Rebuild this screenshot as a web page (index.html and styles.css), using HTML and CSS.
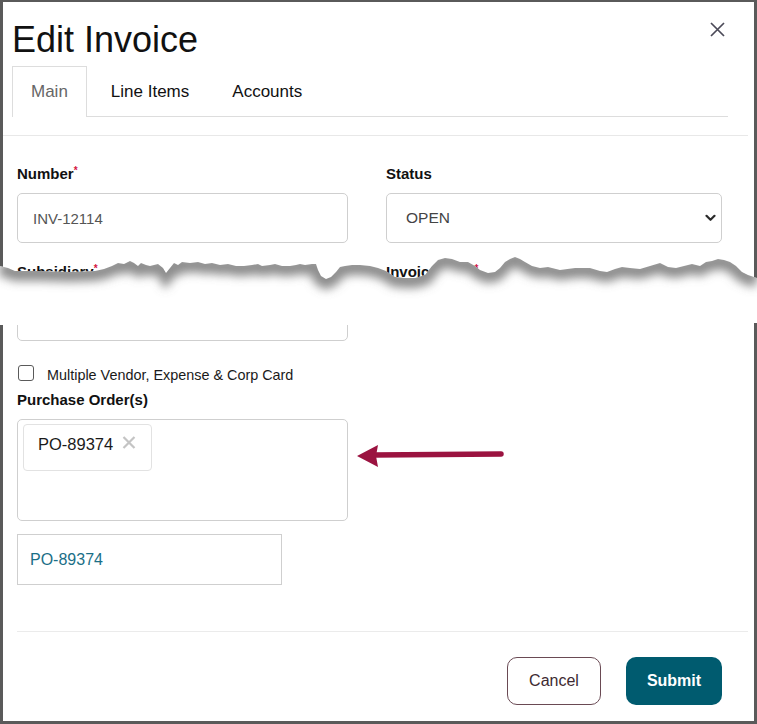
FILE: index.html
```html
<!DOCTYPE html>
<html>
<head>
<meta charset="utf-8">
<title>Edit Invoice</title>
<link rel="stylesheet" href="styles.css">
</head>
<body>
<div class="page">
  <div class="frame">
    <header class="head">
      <h1 class="title">Edit Invoice</h1>
      <button class="close" aria-label="Close">
        <svg width="15" height="15" viewBox="0 0 15 15"><path d="M1 1 L14 14 M14 1 L1 14" stroke="#4b4a58" stroke-width="1.7" fill="none"/></svg>
      </button>
    </header>
    <nav class="tabs">
      <div class="tab active">Main</div>
      <div class="tab">Line Items</div>
      <div class="tab">Accounts</div>
    </nav>
    <div class="rule-top"></div>
    <form class="form">
      <div class="grid">
        <div class="field">
          <label class="lbl">Number<sup class="req">*</sup></label>
          <div class="input">INV-12114</div>
        </div>
        <div class="field">
          <label class="lbl">Status</label>
          <div class="input select"><span>OPEN</span>
            <svg width="11" height="8" viewBox="0 0 11 8"><path d="M1.5 1.8 L5.5 5.8 L9.5 1.8" stroke="#2a2a2a" stroke-width="2.2" fill="none" stroke-linecap="round" stroke-linejoin="round"/></svg>
          </div>
        </div>
        <div class="field">
          <label class="lbl">Subsidiary<sup class="req">*</sup></label>
          <div class="input"></div>
        </div>
        <div class="field">
          <label class="lbl">Invoice Date<sup class="req">*</sup></label>
          <div class="input"></div>
        </div>
      </div>
      <label class="check"><span class="box"></span><span>Multiple Vendor, Expense &amp; Corp Card</span></label>
      <div class="lbl po-lbl">Purchase Order(s)</div>
      <div class="multi">
        <span class="chip">PO-89374
          <svg class="chip-x" width="14" height="13" viewBox="0 0 14 13"><path d="M1.5 1 L12.5 12 M12.5 1 L1.5 12" stroke="#c4c4c4" stroke-width="2.2" fill="none"/></svg>
        </span>
      </div>
      <div class="linkbox"><span class="link">PO-89374</span></div>
    </form>
    <div class="divider"></div>
    <div class="actions">
      <button class="btn cancel" type="button">Cancel</button>
      <button class="btn submit" type="button">Submit</button>
    </div>
  </div>

  <svg class="tear" width="757" height="100" viewBox="0 250 757 100">
    <defs>
      <clipPath id="tearclip">
        <path d="M0,266 L8,268 L15,271 L40,271 L70,272 L95,271 L104,269 L112,266 L118,263 L124,264 L130,261 L134,263 L138,266 L141,263 L146,265 L150,266 L158,264 L163,268 L166,273 L170,268 L174,263 L178,265 L182,262 L190,263 L198,262 L205,264 L212,263 L220,265 L228,264 L236,266 L244,266 L252,265 L258,264 L262,266 L270,265 L275,264 L282,266 L290,266 L296,265 L300,264 L305,265 L312,264 L316,264 L318,270 L321,276 L326,279 L331,277 L336,272 L340,267 L345,266 L352,265 L360,265 L370,266 L378,268 L386,271 L395,277 L405,278 L415,278 L425,275 L432,266 L438,260 L445,258 L452,259 L460,262 L468,262 L475,266 L480,270 L488,273 L495,272 L500,268 L505,262 L510,259 L515,257 L520,259 L525,262 L532,266 L540,268 L548,267 L560,270 L575,268 L590,268 L600,271 L607,272 L615,269 L622,267 L630,268 L640,269 L650,266 L660,263 L668,267 L676,268 L684,266 L692,264 L700,266 L706,262 L712,261 L718,259 L724,260 L730,262 L736,266 L742,272 L748,275 L757,278 L757,323 L751,323 L751,350 L360,350 L360,325 L0,325 Z"/>
      </clipPath>
      <filter id="blur" filterUnits="userSpaceOnUse" x="-20" y="230" width="800" height="120">
        <feGaussianBlur stdDeviation="5"/>
      </filter>
    </defs>
    <g clip-path="url(#tearclip)">
      <rect x="0" y="250" width="757" height="100" fill="#ffffff"/>
      <polyline transform="translate(0,2)" filter="url(#blur)" fill="none" stroke="#707070" stroke-opacity="0.8" stroke-width="16" points="0,266 8,268 15,271 40,271 70,272 95,271 104,269 112,266 118,263 124,264 130,261 134,263 138,266 141,263 146,265 150,266 158,264 163,268 166,273 170,268 174,263 178,265 182,262 190,263 198,262 205,264 212,263 220,265 228,264 236,266 244,266 252,265 258,264 262,266 270,265 275,264 282,266 290,266 296,265 300,264 305,265 312,264 316,264 318,270 321,276 326,279 331,277 336,272 340,267 345,266 352,265 360,265 370,266 378,268 386,271 395,277 405,278 415,278 425,275 432,266 438,260 445,258 452,259 460,262 468,262 475,266 480,270 488,273 495,272 500,268 505,262 510,259 515,257 520,259 525,262 532,266 540,268 548,267 560,270 575,268 590,268 600,271 607,272 615,269 622,267 630,268 640,269 650,266 660,263 668,267 676,268 684,266 692,264 700,266 706,262 712,261 718,259 724,260 730,262 736,266 742,272 748,275 757,278"/>
    </g>
  </svg>

  <svg class="arrow" width="152" height="28" viewBox="355 442 152 28">
    <line x1="374" y1="455" x2="501" y2="454" stroke="#9b1340" stroke-width="5.5" stroke-linecap="round"/>
    <path d="M357,456 L378,445 L376,456 L378,467 Z" fill="#9b1340"/>
  </svg>
</div>
</body>
</html>
```

FILE: styles.css
```css
body {
  margin: 0;
  background: #ffffff;
  font-family: "Liberation Sans", Arial, sans-serif;
  color: #111111;
}

.page {
  position: relative;
  width: 757px;
  height: 724px;
  overflow: hidden;
}

.frame {
  box-sizing: border-box;
  width: 757px;
  height: 724px;
  border: 3px solid #5a5a5a;
  border-top-width: 2px;
  display: flex;
  flex-direction: column;
  background: #ffffff;
}

.head {
  display: flex;
  justify-content: space-between;
  align-items: flex-start;
  padding: 18px 29px 0 9px;
}

.title {
  margin: 0;
  font-size: 36px;
  line-height: 40px;
  font-weight: 400;
  color: #111111;
}

.close {
  margin-top: 2px;
  padding: 0;
  border: 0;
  background: none;
  width: 15px;
  height: 15px;
  display: flex;
}

.tabs {
  display: flex;
  gap: 5px;
  margin: 6px 26px 0 9px;
  height: 51px;
  box-sizing: border-box;
  border-bottom: 1px solid #dddddd;
}

.tab {
  box-sizing: border-box;
  height: 50px;
  display: flex;
  align-items: center;
  padding: 0 18px;
  border: 1px solid transparent;
  border-bottom: 0;
  font-size: 17px;
  color: #111111;
}

.tab.active {
  height: 51px;
  margin-bottom: -1px;
  border-color: #dddddd;
  background: #ffffff;
  color: #666666;
  padding-bottom: 1px;
}

.rule-top {
  height: 1px;
  margin: 18px 6px 0 0;
  background: #e8e8e8;
}

.form {
  margin: 28px 0 0 0;
  padding: 0 32px 0 14px;
  display: flex;
  flex-direction: column;
  align-items: flex-start;
}

.grid {
  display: grid;
  grid-template-columns: 331px 336px;
  column-gap: 38px;
  row-gap: 19px;
}

.field {
  display: flex;
  flex-direction: column;
}

.lbl {
  font-size: 15px;
  line-height: 20px;
  font-weight: 700;
  color: #111111;
  margin-bottom: 9px;
}

.req {
  color: #d4143e;
  font-size: 10px;
  line-height: 0;
  vertical-align: 5px;
  font-weight: 700;
}

.input {
  box-sizing: border-box;
  height: 50px;
  border: 1px solid #cfcfcf;
  border-radius: 5px;
  padding: 0 15px;
  display: flex;
  align-items: center;
  font-size: 15px;
  color: #555555;
}

.select {
  justify-content: space-between;
  padding: 0 5px 0 19px;
  font-size: 15.5px;
  color: #444444;
}

.check {
  display: flex;
  align-items: flex-start;
  margin-top: 23px;
  font-size: 14.4px;
  line-height: 22px;
  color: #1a1a1a;
}

.box {
  box-sizing: border-box;
  width: 16px;
  height: 16px;
  margin: 1px 13px 0 1px;
  border: 1.5px solid #5a5a5a;
  border-radius: 3px;
  background: #ffffff;
}

.po-lbl {
  margin-top: 4px;
}

.multi {
  box-sizing: border-box;
  width: 331px;
  height: 102px;
  border: 1px solid #cfcfcf;
  border-radius: 5px;
  padding: 4px 5px;
  display: flex;
  align-items: flex-start;
}

.chip {
  display: flex;
  align-items: flex-start;
  gap: 9px;
  padding: 9px 15px 16px 14px;
  border: 1px solid #e2e2e2;
  border-radius: 4px;
  font-size: 16.5px;
  line-height: 20px;
  color: #1a1a1a;
}

.chip-x {
  margin-top: 2px;
}

.linkbox {
  box-sizing: border-box;
  margin-top: 13px;
  width: 265px;
  height: 51px;
  border: 1px solid #cfcfcf;
  padding-left: 12px;
  display: flex;
  align-items: center;
}

.link {
  font-size: 16px;
  color: #1b6f87;
}

.divider {
  height: 1px;
  margin: 46px 6px 0 14px;
  background: #ebebeb;
}

.actions {
  display: flex;
  justify-content: flex-end;
  gap: 25px;
  margin-top: 25px;
  padding-right: 32px;
}

.btn {
  box-sizing: border-box;
  height: 48px;
  border-radius: 10px;
  font-family: "Liberation Sans", Arial, sans-serif;
  font-size: 16px;
  padding: 0;
}

.cancel {
  width: 94px;
  background: #ffffff;
  border: 1.5px solid #6a4a54;
  color: #3d2a31;
}

.submit {
  width: 96px;
  background: #005b6f;
  border: 0;
  color: #ffffff;
  font-weight: 700;
}

.tear {
  position: absolute;
  left: 0;
  top: 250px;
}

.arrow {
  position: absolute;
  left: 355px;
  top: 442px;
}
```
